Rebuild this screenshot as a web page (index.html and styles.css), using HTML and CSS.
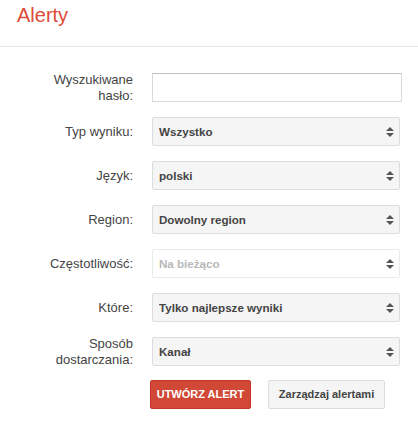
FILE: index.html
```html
<!DOCTYPE html>
<html lang="pl">
<head>
    <meta charset="UTF-8">
    <meta name="viewport" content="width=device-width, initial-scale=1.0">
    <title>Alerty</title>
    <link rel="stylesheet" href="styles.css">
</head>
<body>
    <header class="page-header">
        <h1>Alerty</h1>
    </header>

    <form class="alert-form">
        <label class="field-label" for="query">Wyszukiwane hasło:</label>
        <input class="text-input" id="query" type="text">

        <label class="field-label" for="type">Typ wyniku:</label>
        <div class="select-wrap">
            <select id="type" class="select-box"><option>Wszystko</option></select>
            <svg class="arrows" width="8" height="10" viewBox="0 0 8 10"><polygon points="0,4 4,0 8,4"/><polygon points="0,6 4,10 8,6"/></svg>
        </div>

        <label class="field-label" for="lang">Język:</label>
        <div class="select-wrap">
            <select id="lang" class="select-box"><option>polski</option></select>
            <svg class="arrows" width="8" height="10" viewBox="0 0 8 10"><polygon points="0,4 4,0 8,4"/><polygon points="0,6 4,10 8,6"/></svg>
        </div>

        <label class="field-label" for="region">Region:</label>
        <div class="select-wrap">
            <select id="region" class="select-box"><option>Dowolny region</option></select>
            <svg class="arrows" width="8" height="10" viewBox="0 0 8 10"><polygon points="0,4 4,0 8,4"/><polygon points="0,6 4,10 8,6"/></svg>
        </div>

        <label class="field-label" for="freq">Częstotliwość:</label>
        <div class="select-wrap">
            <select id="freq" class="select-box" disabled><option>Na bieżąco</option></select>
            <svg class="arrows" width="8" height="10" viewBox="0 0 8 10"><polygon points="0,4 4,0 8,4"/><polygon points="0,6 4,10 8,6"/></svg>
        </div>

        <label class="field-label" for="which">Które:</label>
        <div class="select-wrap">
            <select id="which" class="select-box"><option>Tylko najlepsze wyniki</option></select>
            <svg class="arrows" width="8" height="10" viewBox="0 0 8 10"><polygon points="0,4 4,0 8,4"/><polygon points="0,6 4,10 8,6"/></svg>
        </div>

        <label class="field-label" for="deliver">Sposób dostarczania:</label>
        <div class="select-wrap">
            <select id="deliver" class="select-box"><option>Kanał</option></select>
            <svg class="arrows" width="8" height="10" viewBox="0 0 8 10"><polygon points="0,4 4,0 8,4"/><polygon points="0,6 4,10 8,6"/></svg>
        </div>

        <div class="actions">
            <button type="button" class="btn btn-primary">UTWÓRZ ALERT</button>
            <button type="button" class="btn btn-default">Zarządzaj alertami</button>
        </div>
    </form>
</body>
</html>
```

FILE: styles.css
```css
/* Style global */
body {
    font-family: Arial, "Liberation Sans", sans-serif;
    margin: 0;
    padding: 0;
    background-color: white;
    color: #444;
}

.page-header {
    padding: 3px 17px 19px;
    border-bottom: 1px solid #e5e5e5;
}

.page-header h1 {
    margin: 0;
    font-size: 20px;
    line-height: 24px;
    font-weight: normal;
    color: #dd4b39;
}

.alert-form {
    display: grid;
    grid-template-columns: 133px 250px;
    grid-auto-rows: 29px;
    column-gap: 19px;
    row-gap: 15px;
    align-items: center;
    margin-top: 26px;
}

.field-label {
    padding-left: 46px;
    text-align: right;
    font-size: 13px;
    line-height: 16px;
    color: #444;
}

.text-input {
    box-sizing: border-box;
    width: 250px;
    height: 29px;
    margin: 0;
    border: 1px solid #d9d9d9;
    border-top-color: #c0c0c0;
    background-color: white;
    padding: 0 7px;
    font-size: 13px;
}

.select-wrap {
    position: relative;
    width: 248px;
    height: 29px;
}

.select-box {
    appearance: none;
    box-sizing: border-box;
    width: 248px;
    height: 29px;
    margin: 0;
    padding: 0 20px 0 6px;
    border: 1px solid #dcdcdc;
    border-radius: 2px;
    background-color: #f5f5f5;
    font-family: Arial, "Liberation Sans", sans-serif;
    font-size: 11.6px;
    font-weight: bold;
    color: #444;
}

.select-box:disabled {
    background-color: white;
    border-color: #eaeaea;
    color: #b8b8b8;
    opacity: 1;
}

.arrows {
    position: absolute;
    right: 6px;
    top: 10px;
    fill: #555;
    pointer-events: none;
}

.actions {
    grid-column: 2;
    display: flex;
    gap: 17px;
    margin-left: -2px;
    margin-top: -3px;
}

.btn {
    box-sizing: border-box;
    height: 29px;
    padding: 0;
    border-radius: 2px;
    font-family: Arial, "Liberation Sans", sans-serif;
    font-size: 11px;
    font-weight: bold;
    white-space: nowrap;
    cursor: pointer;
}

.btn-primary {
    width: 101px;
    background-color: #d14836;
    border: 1px solid #c53727;
    color: white;
}

.btn-default {
    width: 117px;
    background-color: #f5f5f5;
    border: 1px solid #dcdcdc;
    color: #444;
}
```
